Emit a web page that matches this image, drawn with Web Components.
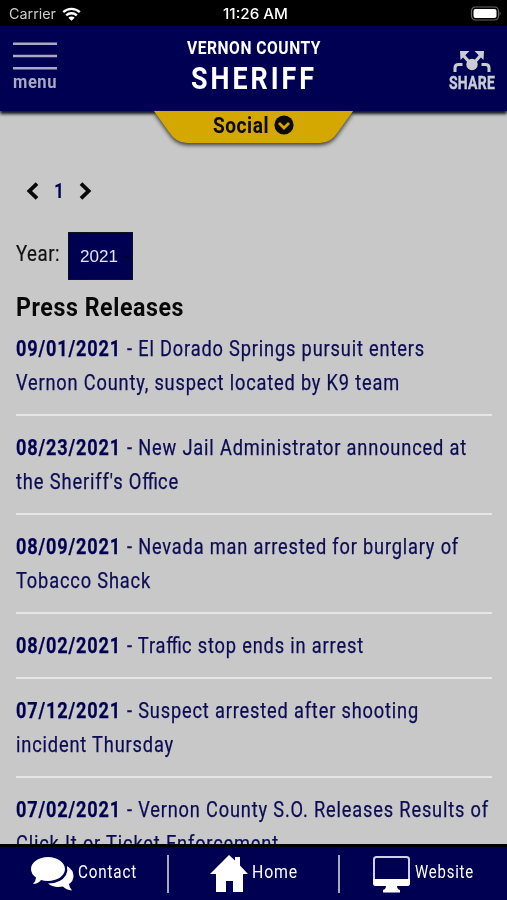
<!DOCTYPE html>
<html lang="en">
<head>
<meta charset="utf-8">
<title>Vernon County Sheriff</title>
<style>
  body {
    margin: 0;
    background: #c8c8c8;
    font-family: Roboto, "Liberation Sans", sans-serif;
  }
</style>
</head>
<body>
<sheriff-app></sheriff-app>

<script>
// Text squeezed horizontally to the width given in "w"
class CondText extends HTMLElement {
  constructor() {
    super();
    this.attachShadow({ mode: 'open' });
    this.shadowRoot.innerHTML = `
      <style>
        :host {
          display: block;
          flex: none;
          white-space: nowrap;
        }
        span {
          display: inline-block;
          vertical-align: top;
          letter-spacing: var(--spacing, 0.6px);
          transform-origin: 0 0;
        }
        /* no spacing, so that the letters join into a ligature */
        ::slotted(i) {
          font-style: normal;
          letter-spacing: 0;
        }
      </style>
      <span><slot></slot></span>
    `;
  }
  connectedCallback() {
    const width = Number(this.getAttribute('w'));
    const span = this.shadowRoot.querySelector('span');
    this.style.width = width + 'px';
    span.style.transform = `scaleX(${width / span.getBoundingClientRect().width})`;
  }
}

class StatusBar extends HTMLElement {
  constructor() {
    super();
    this.attachShadow({ mode: 'open' });
    this.shadowRoot.innerHTML = `
      <style>
        :host {
          display: grid;
          grid-template-columns: 1fr auto 1fr;
          align-items: center;
          box-sizing: border-box;
          height: 26px;
          padding: 1px 6px 0 9px;
          background: #000;
          color: #fff;
          font: 14px/24px Inter, sans-serif;
        }
        .left {
          display: flex;
          align-items: center;
          gap: 6px;
          color: #ccc;
        }
        .battery {
          justify-self: end;
        }
        svg {
          display: block;
        }
      </style>
      <div class="left">
        <cond-text w="47" style="--spacing: 0px">Carrier</cond-text>
        <svg width="19" height="14" viewBox="0 0 19 14" fill="none" stroke="#fff" stroke-width="2.3">
          <path d="M1.2 5.2a12 12 0 0 1 16.6 0M4.2 8.4a7.6 7.6 0 0 1 10.6 0"/>
          <path d="M9.5 13.8L6.3 10.7a4.6 4.6 0 0 1 6.4 0z" fill="#fff" stroke="none"/>
        </svg>
      </div>
      <cond-text w="65" style="--spacing: 0px; font-weight: 500">11:26 AM</cond-text>
      <svg class="battery" width="31" height="15" viewBox="0 0 31 15">
        <rect x="1.5" y="1" width="27" height="13" rx="4" fill="none" stroke="#666" stroke-width="1.2"/>
        <rect x="3.5" y="3" width="23" height="9" rx="2" fill="#fff"/>
        <path d="M29.7 5.3q1.6 2.2 0 4.4z" fill="#777"/>
      </svg>
    `;
  }
}

class AppHeader extends HTMLElement {
  constructor() {
    super();
    this.attachShadow({ mode: 'open' });
    this.shadowRoot.innerHTML = `
      <style>
        :host {
          display: grid;
          grid-template-columns: 1fr auto 1fr;
          box-sizing: border-box;
          height: 85px;
          padding: 0 12px 0 13px;
          background: #000052;
          color: #fff;
          font-weight: 700;
          box-shadow: 0 3px 3px #10151c;
        }
        svg {
          display: block;
        }
        .menu {
          padding-top: 16px;
          color: #a9a9bf;
          font-size: 18px;
          line-height: 21px;
        }
        .title {
          display: flex;
          flex-direction: column;
          align-items: center;
          padding-top: 10px;
        }
        .county {
          font-size: 18px;
          line-height: 24px;
        }
        .sheriff {
          font-size: 31.5px;
          line-height: 38px;
        }
        .share {
          justify-self: end;
          padding-top: 24px;
          color: #c9cdd2;
          font-size: 18.5px;
          line-height: 20px;
        }
        .share svg {
          margin: 0 0 -1px 4px;
        }
      </style>
      <div class="menu">
        <svg width="44" height="29" viewBox="0 0 44 29" stroke="#a9a9bf" stroke-width="2.4">
          <path d="M0 1.7h44M0 14h44M0 26.2h44"/>
        </svg>
        <cond-text w="44">menu</cond-text>
      </div>
      <div class="title">
        <cond-text class="county" w="134">VERNON COUNTY</cond-text>
        <cond-text class="sheriff" w="126" style="--spacing: 3.5px">SHERIFF</cond-text>
      </div>
      <div class="share">
        <svg width="38" height="24" viewBox="0 0 38 24">
          <g fill="none" stroke="#c9cdd2">
            <path d="M2 22v-4q0-3.5 3.5-3.5h4M36 22v-4q0-3.5-3.5-3.5h-4" stroke-width="3"/>
            <path d="M18 14L10 5M20 14l8-9" stroke-width="3.2"/>
          </g>
          <circle cx="19" cy="14.5" r="5.7" fill="#c9cdd2"/>
          <path d="M7 1h9.5L7.5 10zM31 1h-9.5l9 9z" fill="#c9cdd2"/>
        </svg>
        <cond-text w="46" style="--spacing: 0.3px; -webkit-text-stroke: 0.4px">SHARE</cond-text>
      </div>
    `;
  }
}

class SocialTab extends HTMLElement {
  constructor() {
    super();
    this.attachShadow({ mode: 'open' });
    this.shadowRoot.innerHTML = `
      <style>
        :host {
          display: grid;
          justify-content: center;
          height: 40px;
          position: relative;
          color: #0b0a05;
          font-weight: 700;
          font-size: 21.5px;
          line-height: 29px;
        }
        .shape, .label {
          grid-area: 1 / 1;
        }
        .shape {
          filter: drop-shadow(0 2px 2px #333);
        }
        .label {
          display: flex;
          align-items: flex-start;
          justify-content: center;
          gap: 5px;
          z-index: 1;
        }
        .label svg {
          margin-top: 4px;
        }
      </style>
      <svg class="shape" width="202" height="33" viewBox="0 0 202 33">
        <path d="M1 0H200L185 21Q178 32 167 32H34Q23 32 16 21Z" fill="#d4a800"/>
      </svg>
      <div class="label">
        <cond-text w="56">Social</cond-text>
        <svg width="20" height="20" viewBox="0 0 20 20">
          <circle cx="10" cy="10" r="9.6" fill="#0b0a05"/>
          <path d="M5 8l5 5 5-5" fill="none" stroke="#d4a800" stroke-width="2.8"/>
        </svg>
      </div>
    `;
  }
}

class PageNav extends HTMLElement {
  constructor() {
    super();
    this.attachShadow({ mode: 'open' });
    this.shadowRoot.innerHTML = `
      <style>
        :host {
          display: flex;
          align-items: center;
          gap: 15px;
          height: 28px;
          padding: 26px 0 0 10px;
          color: #000052;
          font-weight: 700;
          font-size: 21px;
          line-height: 28px;
        }
      </style>
      <svg width="13" height="18" viewBox="0 0 13 18" fill="none" stroke="#080808" stroke-width="3.8">
        <path d="M11 1.7L3.4 9l7.6 7.3"/>
      </svg>
      <cond-text w="10" style="--spacing: 0px">1</cond-text>
      <svg width="13" height="18" viewBox="0 0 13 18" fill="none" stroke="#080808" stroke-width="3.8">
        <path d="M2 1.7L9.6 9 2 16.3"/>
      </svg>
    `;
  }
}

class YearPicker extends HTMLElement {
  constructor() {
    super();
    this.attachShadow({ mode: 'open' });
    this.shadowRoot.innerHTML = `
      <style>
        :host {
          display: flex;
          gap: 8px;
          height: 48px;
          margin-top: 27px;
          color: #111;
          font-size: 22px;
          line-height: 44px;
        }
        .select {
          display: flex;
          align-items: center;
          gap: 6px;
          box-sizing: border-box;
          width: 65px;
          padding: 1px 0 0 11px;
          border: 1px solid #101018;
          background: #000052;
          color: #e4e4f4;
          font: 17px/46px "Liberation Sans", Arial, sans-serif;
        }
        i {
          width: 5px;
          height: 2px;
          background: #000020;
        }
      </style>
      <cond-text w="44" style="-webkit-text-stroke: 0.2px">Year:</cond-text>
      <div class="select"><cond-text w="38" style="--spacing: 0px">2021</cond-text><i></i></div>
    `;
  }
}

class PressItem extends HTMLElement {
  constructor() {
    super();
    this.attachShadow({ mode: 'open' });
    this.shadowRoot.innerHTML = `
      <style>
        :host {
          display: block;
          padding-bottom: 14px;
          margin-bottom: 15px;
          border-bottom: 2px solid #e6e6e6;
          color: #0c0c55;
          font-size: 22px;
          line-height: 34px;
          -webkit-text-stroke: 0.25px;
          --spacing: 1px;
        }
        .first {
          display: flex;
          gap: 6px;
        }
        .date {
          font-weight: 700;
          color: #000052;
        }
      </style>
      <div class="first">
        <cond-text class="date" w="105">${this.getAttribute('date')}</cond-text>
        <slot></slot>
      </div>
      <slot name="more"></slot>
    `;
  }
}

class FooterLink extends HTMLElement {
  constructor() {
    super();
    this.attachShadow({ mode: 'open' });
    this.shadowRoot.innerHTML = `
      <style>
        :host {
          display: flex;
          align-items: flex-start;
          box-sizing: border-box;
          height: 53px;
          color: #fff;
          font-size: 18.5px;
          line-height: 50px;
          --spacing: 1px;
        }
        ::slotted(svg) {
          flex: none;
          margin-top: 8px;
        }
      </style>
      <slot></slot>
    `;
  }
}

class AppFooter extends HTMLElement {
  constructor() {
    super();
    this.attachShadow({ mode: 'open' });
    this.shadowRoot.innerHTML = `
      <style>
        :host {
          display: grid;
          grid-template-columns: 167px 2px 169px 2px 1fr;
          box-sizing: border-box;
          height: 56px;
          border-top: 3px solid #000;
          background: #000052;
        }
        hr {
          width: 2px;
          height: 38px;
          margin: 8px 0 0;
          border: 0;
          background: #aaaabd;
        }
      </style>
      <footer-link style="padding-left: 30px; gap: 4px">
        <svg width="44" height="38" viewBox="0 0 44 38" fill="#fff">
          <path d="M18 2C27 2 35 7 35 14S27 26 18 26Q14 26 11 25Q8 29 3 29Q6 26 6 22.5Q1 19 1 14C1 7 9 2 18 2Z"/>
          <path d="M37 11Q43.5 15 43.5 21Q43.5 26 39 29Q39 32 42 35.5Q36 35 33 31.5Q23 33 18 28.5Q31 28.5 36 20Q38 16 37 11Z"/>
        </svg>
        <cond-text w="59">Contact</cond-text>
      </footer-link>
      <hr>
      <footer-link style="padding-left: 41px; gap: 4px">
        <svg width="38" height="38" viewBox="0 0 38 38" fill="#fff">
          <path d="M19 0L25 5.5V2H30V10.5L38 19H33V37H23V26H16V37H6V19H0Z"/>
        </svg>
        <cond-text w="46">Home</cond-text>
      </footer-link>
      <hr>
      <footer-link style="padding-left: 32px; gap: 4px">
        <svg width="39" height="38" viewBox="0 0 39 38" fill="#fff">
          <rect x="2" y="2" width="35" height="28" rx="2.5" fill="none" stroke="#d0d0ea" stroke-width="2"/>
          <path d="M1 24H38V28Q38 31 35 31H25Q25 34 28 35V37.5H11V35Q14 34 14 31H4Q1 31 1 28Z"/>
        </svg>
        <cond-text w="59">Website</cond-text>
      </footer-link>
    `;
  }
}

class SheriffApp extends HTMLElement {
  constructor() {
    super();
    this.attachShadow({ mode: 'open' });
    this.shadowRoot.innerHTML = `
      <style>
        :host {
          display: flex;
          flex-direction: column;
          height: 900px;
          overflow: hidden;
          background: #c8c8c8;
        }
        status-bar, app-header, social-tab, app-footer {
          flex: none;
        }
        main {
          flex: 1;
          min-height: 0;
          overflow: hidden;
          padding: 0 15px 0 16px;
        }
        h2 {
          margin: 10px 0 8px;
          color: #080808;
          font-size: 26px;
          line-height: 34px;
        }
      </style>
      <status-bar></status-bar>
      <app-header></app-header>
      <social-tab></social-tab>
      <main>
        <page-nav></page-nav>
        <year-picker></year-picker>
        <h2><cond-text w="168">Press Releases</cond-text></h2>
        <press-item date="09/01/2021">
          <cond-text w="298">- El Dorado Springs pursuit enters</cond-text>
          <cond-text slot="more" w="384">Vernon County, suspect located by K9 team</cond-text>
        </press-item>
        <press-item date="08/23/2021">
          <cond-text w="340">- New Jail Administrator announced at</cond-text>
          <cond-text slot="more" w="163">the Sheriff's O<i>ffi</i>ce</cond-text>
        </press-item>
        <press-item date="08/09/2021">
          <cond-text w="332">- Nevada man arrested for burglary of</cond-text>
          <cond-text slot="more" w="135">Tobacco Shack</cond-text>
        </press-item>
        <press-item date="08/02/2021">
          <cond-text w="237">- Tra<i>ffi</i>c stop ends in arrest</cond-text>
        </press-item>
        <press-item date="07/12/2021">
          <cond-text w="292">- Suspect arrested after shooting</cond-text>
          <cond-text slot="more" w="158">incident Thursday</cond-text>
        </press-item>
        <press-item date="07/02/2021">
          <cond-text w="362">- Vernon County S.O. Releases Results of</cond-text>
          <cond-text slot="more" w="263">Click It or Ticket Enforcement</cond-text>
        </press-item>
      </main>
      <app-footer></app-footer>
    `;
  }
}

customElements.define('status-bar', StatusBar);
customElements.define('app-header', AppHeader);
customElements.define('social-tab', SocialTab);
customElements.define('page-nav', PageNav);
customElements.define('year-picker', YearPicker);
customElements.define('press-item', PressItem);
customElements.define('footer-link', FooterLink);
customElements.define('app-footer', AppFooter);
customElements.define('sheriff-app', SheriffApp);
// last, so that every text is already laid out when it is measured
customElements.define('cond-text', CondText);
</script>
</body>
</html>
